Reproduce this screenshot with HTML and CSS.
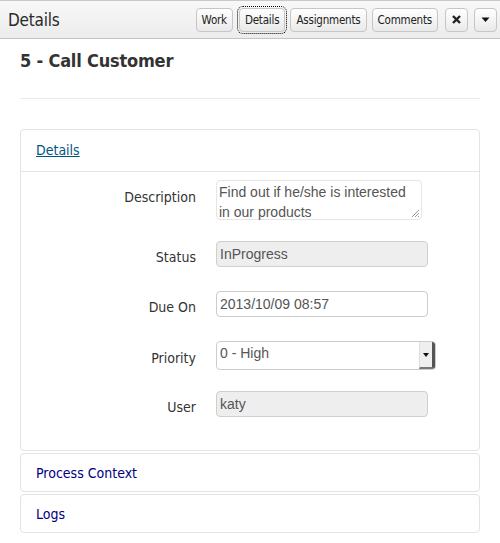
FILE: index.html
```html
<!DOCTYPE html>
<html>
<head>
<meta charset="utf-8">
<link rel="stylesheet" href="styles.css">
</head>
<body>
<div class="topbar">
  <div class="topbar-title">Details</div>
  <div class="btns">
    <button class="btn">Work</button>
    <button class="btn btn-focus">Details</button>
    <button class="btn">Assignments</button>
    <button class="btn">Comments</button>
    <button class="btn btn-icon btn-close"><svg width="9" height="9" viewBox="0 0 9 9"><path d="M1 1 L8 8 M8 1 L1 8" stroke="#222" stroke-width="2.4" stroke-linecap="butt"/></svg></button>
    <button class="btn btn-icon btn-caret"><svg width="9" height="6" viewBox="0 0 9 6"><path d="M0.5 0.5 H8.5 L4.5 5 Z" fill="#111"/></svg></button>
  </div>
</div>
<div class="content">
  <h3 class="task-title">5 - Call Customer</h3>
  <hr class="sep">
  <div class="panel">
    <div class="panel-head"><a class="panel-link active" href="#">Details</a></div>
    <div class="panel-body">
      <div class="row">
        <label class="lbl lbl-ta">Description</label>
        <div class="ctl"><div class="textarea">Find out if he/she is interested in our products<svg class="grip" width="10" height="10" viewBox="0 0 10 10"><path d="M9 2 L2 9 M9 5 L5 9 M9 8 L8 9" stroke="#999" stroke-width="1"/></svg></div></div>
      </div>
      <div class="row">
        <label class="lbl">Status</label>
        <div class="ctl"><div class="input disabled">InProgress</div></div>
      </div>
      <div class="row">
        <label class="lbl">Due On</label>
        <div class="ctl"><div class="input">2013/10/09 08:57</div></div>
      </div>
      <div class="row">
        <label class="lbl lbl-sel">Priority</label>
        <div class="ctl"><div class="select"><span class="sel-text">0 - High</span><span class="sel-arrow"><svg width="6" height="4" viewBox="0 0 6 4"><path d="M0 0 H6 L3 4 Z" fill="#111"/></svg></span></div></div>
      </div>
      <div class="row">
        <label class="lbl">User</label>
        <div class="ctl"><div class="input disabled">katy</div></div>
      </div>
    </div>
  </div>
  <div class="panel panel-small">
    <div class="panel-head"><a class="panel-link" href="#">Process Context</a></div>
  </div>
  <div class="panel panel-small">
    <div class="panel-head"><a class="panel-link" href="#">Logs</a></div>
  </div>
</div>
</body>
</html>
```
FILE: styles.css
```css
html, body {
  margin: 0;
  padding: 0;
  background: #fff;
}
body {
  font-family: "DejaVu Sans Condensed", "DejaVu Sans", sans-serif;
  color: #333;
  width: 500px;
}
.topbar {
  height: 37px;
  border-top: 1px solid #c9c9c9;
  border-bottom: 1px solid #c4c4c4;
  background: linear-gradient(#f8f8f8, #ececec);
  display: flex;
  align-items: center;
  padding: 0 3px 0 8px;
}
.topbar-title {
  font-size: 17px;
  color: #2a2a2a;
  letter-spacing: -0.2px;
}
.btns {
  margin-left: auto;
  display: flex;
  gap: 5px;
  align-items: center;
}
.btn {
  height: 24px;
  padding: 0 5px;
  border: 1px solid #c6c6c6;
  border-radius: 4px;
  background: linear-gradient(#ffffff, #e9e9e9);
  font-family: "DejaVu Sans Condensed", "DejaVu Sans", sans-serif;
  font-size: 11.5px;
  color: #222;
  display: flex;
  align-items: center;
  justify-content: center;
  letter-spacing: -0.2px;
}
.btn:first-child { margin-right: 1px; }
.btn-focus {
  outline: 1px dotted #000;
  outline-offset: 1px;
}
.btn-icon {
  width: 23px;
  padding: 0;
}
.btn-close { margin-left: 2px; margin-right: 1px; }
.content {
  padding: 0 20px;
}
.task-title {
  margin: 11px 0 0 0;
  font-size: 18px;
  font-weight: bold;
  color: #333;
  line-height: 22px;
  letter-spacing: -0.2px;
}
.sep {
  border: 0;
  border-top: 1px solid #eaeaea;
  margin: 26px 0 30px 0;
  height: 0;
}
.panel {
  border: 1px solid #e3e3e3;
  border-radius: 4px;
  margin-bottom: 2px;
}
.panel-head {
  height: 41px;
  padding: 0 15px 2px 15px;
  box-sizing: border-box;
  display: flex;
  align-items: center;
}
.panel-small .panel-head {
  height: 37px;
  padding-bottom: 0;
}
.panel-link {
  font-size: 14px;
  color: #00007f;
  text-decoration: none;
}
.panel-link.active {
  color: #005580;
  text-decoration: underline;
}
.panel-body {
  border-top: 1px solid #e5e5e5;
  padding: 8px 15px 9px 15px;
}
.row {
  display: flex;
  min-height: 29px;
  margin-bottom: 21px;
}
.lbl {
  width: 160px;
  flex: none;
  text-align: right;
  font-size: 14px;
  color: #333;
  padding-top: 8px;
  margin-right: 20px;
}
.lbl-ta { padding-top: 9px; }
.lbl-sel { padding-top: 9px; }
.ctl {
  flex: none;
}
.input, .textarea, .select {
  font-family: "Liberation Sans", Arial, sans-serif;
  font-size: 14px;
  color: #555;
  box-sizing: border-box;
}
.textarea {
  position: relative;
  width: 206px;
  height: 40px;
  border: 1px solid #e6e6e6;
  border-radius: 4px;
  padding: 1px 2px;
  line-height: 20px;
}
.grip {
  position: absolute;
  right: 1px;
  bottom: 1px;
}
.input {
  width: 212px;
  height: 26px;
  border: 1px solid #ccc;
  border-radius: 4px;
  padding: 0 3px;
  line-height: 25px;
}
.input.disabled {
  background: #eee;
  border-color: #cfcfcf;
}
.select {
  width: 220px;
  height: 29px;
  border: 1px solid #ccc;
  border-radius: 4px;
  display: flex;
  overflow: hidden;
}
.sel-text {
  flex: 1;
  padding: 1px 3px;
  line-height: 20px;
}
.sel-arrow {
  width: 12px;
  background: #efefef;
  border-right: 3px solid #555;
  border-bottom: 2px solid #777;
  border-left: 1px solid #ddd;
  display: flex;
  align-items: center;
  justify-content: center;
}
```
